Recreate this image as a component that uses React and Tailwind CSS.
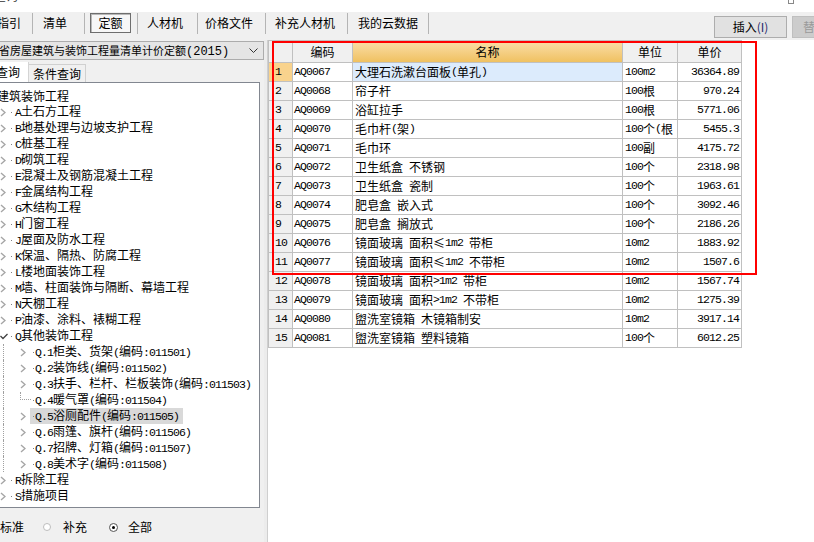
import React from 'react';

// ASCII runs are drawn narrow (6px per char) like the half-width glyphs in the shot
const ASCII_SPLIT = /([\x20-\x7e]+)/;
const ASCII_ONLY = /^[\x20-\x7e]+$/;

function T({ s }) {
  return s
    .split(ASCII_SPLIT)
    .filter(Boolean)
    .map((part, i) =>
      ASCII_ONLY.test(part) ? (
        <span key={i} className="font-['Liberation_Mono',monospace] text-[11.5px] tracking-[-0.9px] whitespace-pre">
          {part}
        </span>
      ) : (
        <span key={i}>{part}</span>
      )
    );
}

function Chev() {
  return (
    <svg width="6" height="9" viewBox="0 0 6 9" className="shrink-0">
      <path d="M1 1l4 3.5L1 8" fill="none" stroke="#a6a6a6" strokeWidth="1.4" />
    </svg>
  );
}

function ChevOpen() {
  return (
    <svg width="8" height="7" viewBox="0 0 8 7" className="shrink-0">
      <path d="M0.5 3L3 5.5L7.5 1" fill="none" stroke="#404040" strokeWidth="1.3" />
    </svg>
  );
}

const tree = [
  { lv: 0, t: '建筑装饰工程' },
  { lv: 1, t: 'A土石方工程' },
  { lv: 1, t: 'B地基处理与边坡支护工程' },
  { lv: 1, t: 'C桩基工程' },
  { lv: 1, t: 'D砌筑工程' },
  { lv: 1, t: 'E混凝土及钢筋混凝土工程' },
  { lv: 1, t: 'F金属结构工程' },
  { lv: 1, t: 'G木结构工程' },
  { lv: 1, t: 'H门窗工程' },
  { lv: 1, t: 'J屋面及防水工程' },
  { lv: 1, t: 'K保温、隔热、防腐工程' },
  { lv: 1, t: 'L楼地面装饰工程' },
  { lv: 1, t: 'M墙、柱面装饰与隔断、幕墙工程' },
  { lv: 1, t: 'N天棚工程' },
  { lv: 1, t: 'P油漆、涂料、裱糊工程' },
  { lv: 1, t: 'Q其他装饰工程', open: true },
  { lv: 2, t: 'Q.1柜类、货架(编码:011501)' },
  { lv: 2, t: 'Q.2装饰线(编码:011502)' },
  { lv: 2, t: 'Q.3扶手、栏杆、栏板装饰(编码:011503)' },
  { lv: 2, t: 'Q.4暖气罩(编码:011504)', leaf: true },
  { lv: 2, t: 'Q.5浴厕配件(编码:011505)', sel: true },
  { lv: 2, t: 'Q.6雨篷、旗杆(编码:011506)' },
  { lv: 2, t: 'Q.7招牌、灯箱(编码:011507)' },
  { lv: 2, t: 'Q.8美术字(编码:011508)' },
  { lv: 1, t: 'R拆除工程' },
  { lv: 1, t: 'S措施项目' },
];

const rows = [
  ['1', 'AQ0067', '大理石洗漱台面板(单孔)', '100m2', '36364.89'],
  ['2', 'AQ0068', '帘子杆', '100根', '970.24'],
  ['3', 'AQ0069', '浴缸拉手', '100根', '5771.06'],
  ['4', 'AQ0070', '毛巾杆(架)', '100个(根', '5455.3'],
  ['5', 'AQ0071', '毛巾环', '100副', '4175.72'],
  ['6', 'AQ0072', '卫生纸盒 不锈钢', '100个', '2318.98'],
  ['7', 'AQ0073', '卫生纸盒 瓷制', '100个', '1963.61'],
  ['8', 'AQ0074', '肥皂盒 嵌入式', '100个', '3092.46'],
  ['9', 'AQ0075', '肥皂盒 搁放式', '100个', '2186.26'],
  ['10', 'AQ0076', '镜面玻璃 面积≤1m2 带柜', '10m2', '1883.92'],
  ['11', 'AQ0077', '镜面玻璃 面积≤1m2 不带柜', '10m2', '1507.6'],
  ['12', 'AQ0078', '镜面玻璃 面积>1m2 带柜', '10m2', '1567.74'],
  ['13', 'AQ0079', '镜面玻璃 面积>1m2 不带柜', '10m2', '1275.39'],
  ['14', 'AQ0080', '盥洗室镜箱 木镜箱制安', '10m2', '3917.14'],
  ['15', 'AQ0081', '盥洗室镜箱 塑料镜箱', '100个', '6012.25'],
];

function TreeRow({ item }) {
  if (item.lv === 0) {
    return <div className="h-[16px] flex items-center -ml-[3px] whitespace-nowrap">{item.t}</div>;
  }
  if (item.lv === 1) {
    return (
      <div className="h-[16px] flex items-center whitespace-nowrap">
        {item.open ? <ChevOpen /> : <Chev />}
        <span className={item.open ? 'ml-[3px] w-px h-px bg-[#808080]' : 'ml-[5px] w-px h-px bg-[#808080]'} />
        <span className="ml-[3px]"><T s={item.t} /></span>
      </div>
    );
  }
  return (
    <div className="h-[16px] flex items-center whitespace-nowrap">
      <span className="ml-[3px] w-px self-stretch border-l border-dotted border-[#a0a0a0]" />
      {item.leaf ? (
        <span className="ml-[16px] w-[11px] h-[8px] self-start border-l border-b border-dotted border-[#a0a0a0]" />
      ) : (
        <span className="ml-[16px] flex"><Chev /></span>
      )}
      <span
        className={
          (item.leaf ? '-ml-[1px] ' : 'ml-[4px] ') +
          (item.sel ? 'bg-[#d9d9d9] ' : '') +
          'flex items-center h-[16px] pl-[3px] pr-[4px]'
        }
      >
        <span className="w-px h-px bg-[#808080]" />
        <span className="ml-[1px]"><T s={item.t} /></span>
      </span>
    </div>
  );
}

function Sep() {
  return <div className="w-px h-[21px] mt-[1px] bg-[#b4b4b4] shrink-0" />;
}

export default function App() {
  return (
    <div className="w-[814px] h-[542px] overflow-hidden bg-white text-black text-[12px] leading-[16px] font-['Noto_Sans_CJK_SC',sans-serif] flex flex-col">
      {/* title bar remnant */}
      <div className="h-[12px] shrink-0 flex overflow-hidden">
        <span className="-mt-[10px] -ml-[6px] leading-[12px] text-[#333]">查询</span>
        <span className="ml-[770px] -mt-[4px] w-[6px] h-[8px] border border-[#888] shrink-0" />
      </div>

      {/* toolbar */}
      <div className="h-[28px] shrink-0 bg-[#f0f0f0] flex items-start">
        <div className="-ml-[3px] w-[35px] h-[20px] mt-[1px] flex items-center shrink-0">指引</div>
        <Sep />
        <div className="w-[51px] pl-[10px] h-[20px] mt-[1px] flex items-center shrink-0">清单</div>
        <Sep />
        <div className="w-[52px] shrink-0">
          <div className="ml-[5px] mt-[1px] w-[41px] h-[20px] border border-[#6e6e6e] bg-[#f7f7f7] shadow-[inset_1px_1px_0_#b8b8b8] flex items-center justify-center">
            定额
          </div>
        </div>
        <Sep />
        <div className="w-[59px] pl-[9px] h-[20px] mt-[1px] flex items-center shrink-0">人材机</div>
        <Sep />
        <div className="w-[67px] pl-[7px] h-[20px] mt-[1px] flex items-center shrink-0">价格文件</div>
        <Sep />
        <div className="w-[81px] pl-[9px] h-[20px] mt-[1px] flex items-center shrink-0">补充人材机</div>
        <Sep />
        <div className="w-[80px] pl-[10px] h-[20px] mt-[1px] flex items-center shrink-0">我的云数据</div>
        <Sep />
        <button className="ml-[285px] mt-[4px] w-[73px] h-[22px] shrink-0 border border-[#adadad] bg-[#e1e1e1] flex items-center justify-center">
          插入<span className="text-[#1f2a6b]">(I)</span>
        </button>
        <button className="ml-[5px] mt-[4px] w-[40px] h-[22px] shrink-0 border border-[#bfbfbf] bg-[#cccccc] text-[#9a9a9a] flex items-center pl-[10px]">
          替
        </button>
      </div>

      {/* body */}
      <div className="flex flex-1 min-h-0">
        {/* left panel */}
        <div className="w-[264px] shrink-0 bg-[#f0f0f0] flex flex-col overflow-hidden">
          <div className="mt-[1px] h-[19px] border border-l-0 border-[#acacac] bg-[#e5e5e5] flex items-center overflow-hidden">
            <span className="-ml-[1px] text-[11px] whitespace-nowrap">
              省房屋建筑与装饰工程量清单计价定额
              <span className="font-['Liberation_Mono',monospace] text-[12px]">(2015)</span>
            </span>
            <svg width="9" height="5" viewBox="0 0 9 5" className="ml-auto mr-[5px] shrink-0">
              <path d="M0.5 0.5L4.5 4.5L8.5 0.5" fill="none" stroke="#333" strokeWidth="1" />
            </svg>
          </div>

          <div className="mt-[2px] h-[20px] flex items-end">
            <div className="w-[29px] h-[20px] bg-white border-r border-[#d4d4d4] flex items-center overflow-hidden shrink-0">
              <span className="-ml-[4px] whitespace-nowrap">查询</span>
            </div>
            <div className="w-[57px] h-[18px] bg-[#f0f0f0] border-t border-r border-[#d0d0d0] flex items-center justify-center shrink-0">
              条件查询
            </div>
          </div>

          <div className="w-[260px] h-[426px] shrink-0 bg-white border-t border-r border-b border-[#828790] overflow-hidden pt-[5px]">
            {tree.map((item, i) => (
              <TreeRow key={i} item={item} />
            ))}
          </div>

          <div className="h-[34px] flex items-center pt-[4px] whitespace-nowrap">
            <span>标准</span>
            <span className="ml-[19px] w-[8px] h-[8px] rounded-full border border-[#bdbdbd] bg-white shrink-0" />
            <span className="ml-[12px]">补充</span>
            <span className="ml-[22px] w-[9px] h-[9px] rounded-full border border-[#555] bg-white flex items-center justify-center shrink-0">
              <span className="w-[3px] h-[3px] rounded-full bg-black" />
            </span>
            <span className="ml-[10px]">全部</span>
          </div>
        </div>

        {/* splitter */}
        <div className="w-[4px] shrink-0 bg-[#ececec] border-r border-[#cfcfcf]" />

        {/* table area */}
        <div className="flex-1 bg-white relative">
          <div className="w-[474px] border-l border-t border-[#c0c0c0] grid grid-cols-[24px_60px_270px_55px_64px] whitespace-nowrap">
            <div className="h-[22px] bg-[#f0f0f0] border-r border-b border-[#c0c0c0]" />
            <div className="h-[22px] bg-[#f0f0f0] border-r border-b border-[#c0c0c0] flex items-center justify-center">编码</div>
            <div className="h-[22px] bg-linear-to-b from-[#fadfa8] to-[#f0c160] border-r border-b border-[#c0c0c0] flex items-center justify-center">名称</div>
            <div className="h-[22px] bg-[#f0f0f0] border-r border-b border-[#c0c0c0] flex items-center justify-center">单位</div>
            <div className="h-[22px] bg-[#f0f0f0] border-r border-b border-[#c0c0c0] flex items-center justify-center">单价</div>

            {rows.map((r, i) => (
              <React.Fragment key={r[0]}>
                <div className={(i === 0 ? 'bg-[#f9d38d] ' : 'bg-[#f0f0f0] ') + 'h-[19px] border-r border-b border-[#c0c0c0] flex items-center pl-[6px]'}>
                  <T s={r[0]} />
                </div>
                <div className="h-[19px] border-r border-b border-[#c0c0c0] flex items-center pl-[1px]">
                  <T s={r[1]} />
                </div>
                <div className={(i === 0 ? 'bg-[#dcebfc] ' : '') + 'h-[19px] border-r border-b border-[#c0c0c0] flex items-center pl-[2px] overflow-hidden'}>
                  <T s={r[2]} />
                </div>
                <div className="h-[19px] border-r border-b border-[#c0c0c0] flex items-center pl-[2px] overflow-hidden">
                  <T s={r[3]} />
                </div>
                <div className="h-[19px] border-r border-b border-[#c0c0c0] flex items-center justify-end pr-[2px]">
                  <T s={r[4]} />
                </div>
              </React.Fragment>
            ))}
          </div>

          {/* red annotation box */}
          <div className="absolute left-[4px] top-[1px] w-[485px] h-[234px] border-2 border-[#ff0000] pointer-events-none" />
        </div>
      </div>
    </div>
  );
}
